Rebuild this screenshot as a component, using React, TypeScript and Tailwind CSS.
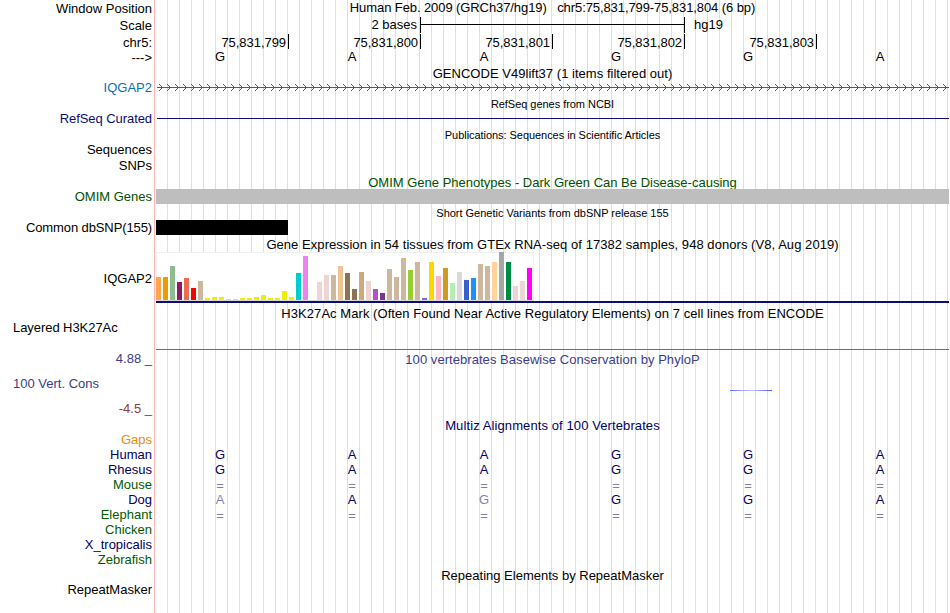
import type { ReactNode } from 'react';

type RowProps = {
  label?: string;
  labelClass?: string;
  height: string;
  children?: ReactNode;
};

const expression: [number, string][] = [
  [23, '#ffa54f'], [23, '#ee9a00'], [34, '#8fbc8f'], [18, '#8b1c62'], [22, '#ee6a50'], [12, '#ff0000'],
  [19, '#cdb79e'], [2, '#eeee00'], [3, '#eeee00'], [3, '#eeee00'], [1, '#eeee00'], [1, '#eeee00'],
  [2, '#eeee00'], [2, '#eeee00'], [3, '#eeee00'], [5, '#eeee00'], [2, '#eeee00'], [2, '#eeee00'],
  [9, '#eeee00'], [3, '#eeee00'], [27, '#00cdcd'], [44, '#ee82ee'], [0, '#9ac0cd'], [18, '#eed5d2'],
  [25, '#eed5d2'], [25, '#cdb79e'], [34, '#eec591'], [27, '#8b7355'], [11, '#8b7355'], [28, '#cdaa7d'],
  [19, '#eed5d2'], [11, '#b452cd'], [7, '#7a378b'], [31, '#cdb79e'], [23, '#cdb79e'], [42, '#cdb79e'],
  [30, '#9acd32'], [38, '#cdb79e'], [2, '#7a67ee'], [38, '#ffd700'], [24, '#ffb6c1'], [32, '#cd9b1d'],
  [17, '#b4eeb4'], [28, '#d9d9d9'], [20, '#3a5fcd'], [22, '#1e90ff'], [36, '#cdb79e'], [34, '#cdb79e'],
  [38, '#ffd39b'], [48, '#a6a6a6'], [38, '#008b45'], [14, '#eed5d2'], [19, '#eed5d2'], [32, '#ff00ff'],
];

const species = [
  { name: 'Gaps', color: 'text-[#e68c0a]', bases: '' },
  { name: 'Human', color: 'text-[#000064]', bases: 'GAAGGA' },
  { name: 'Rhesus', color: 'text-[#000064]', bases: 'GAAGGA' },
  { name: 'Mouse', color: 'text-[#005a00]', bases: '======' },
  { name: 'Dog', color: 'text-[#000064]', bases: 'AAGGGA', mismatch: [0, 2] },
  { name: 'Elephant', color: 'text-[#005a00]', bases: '======' },
  { name: 'Chicken', color: 'text-[#005a00]', bases: '' },
  { name: 'X_tropicalis', color: 'text-[#000064]', bases: '' },
  { name: 'Zebrafish', color: 'text-[#005a00]', bases: '' },
];

const positions = ['75,831,799', '75,831,800', '75,831,801', '75,831,802', '75,831,803'];

function Row({ label, labelClass = 'pt-px text-right', height, children }: RowProps) {
  return (
    <div className={`flex ${height}`}>
      <div className={`w-[155px] shrink-0 border-r border-[#ffb4b4] bg-white pr-[2px] ${labelClass}`}>{label}</div>
      <div className="w-[794px] shrink-0 border-l border-white">{children}</div>
    </div>
  );
}

function Title({ children, className = '' }: { children: ReactNode; className?: string }) {
  return <div className={`text-center ${className}`}>{children}</div>;
}

function Bases({ bases, mismatch = [] }: { bases: string; mismatch?: number[] }) {
  return (
    <div className="-ml-[2px] grid w-[792px] grid-cols-6 text-center">
      {bases.split('').map((base, i) => (
        <span key={i} className={base === '=' ? 'pt-px opacity-50' : mismatch.includes(i) ? 'opacity-50' : ''}>
          {base}
        </span>
      ))}
    </div>
  );
}

// intron line with strand arrows every 8px
function GeneLine() {
  return (
    <svg width="793" height="15" className="block" shapeRendering="crispEdges">
      <defs>
        <pattern id="strand" x="1" width="8" height="15" patternUnits="userSpaceOnUse">
          <path d="M2 4h1v1h-1zM3 5h1v1h-1zM4 6h1v1h-1zM4 8h1v1h-1zM3 9h1v1h-1zM2 10h1v1h-1z" fill="#0c70ac" />
        </pattern>
      </defs>
      <rect x="1" width="792" height="15" fill="url(#strand)" />
      <rect x="1" y="7" width="792" height="1" fill="#0c70ac" />
    </svg>
  );
}

function Expression() {
  return (
    <>
      <div className="flex h-[49px] w-[378px] items-end gap-[2px] border border-[#f0f0f0] border-b-[#d9d9d9] bg-white">
        {expression.map(([height, color], i) => (
          <div key={i} className="w-[5px] shrink-0 first:-ml-px" style={{ height, backgroundColor: color }} />
        ))}
      </div>
      <div className="h-[2px] bg-[#0c0c78]" />
    </>
  );
}

export default function App() {
  return (
    <div className="h-[613px] w-[949px] overflow-hidden bg-[linear-gradient(90deg,#dcdcf8_1px,transparent_1px)] bg-[length:12px_100%] bg-[position:11px_0] font-['Liberation_Sans',Arial,sans-serif] text-[13px] leading-[15px] whitespace-pre text-black">
      <Row label="Window Position" height="h-[17px]">
        <Title className="tracking-[-0.09px]">Human Feb. 2009 (GRCh37/hg19)   chr5:75,831,799-75,831,804 (6 bp)</Title>
      </Row>
      <Row label="Scale" height="h-[17px]">
        <div className="flex h-4">
          <span className="w-[264px] pr-[3px] text-right">2 bases</span>
          <div className="flex w-[265px] items-center border-x border-black">
            <div className="-mt-px h-px w-full bg-black" />
          </div>
          <span className="pl-[9px]">hg19</span>
        </div>
      </Row>
      <Row label="chr5:" height="h-[15px]">
        <div className="-ml-px flex">
          {positions.map((position) => (
            <div key={position} className="h-[15px] w-[132px] border-r border-black pt-px pr-[2px] text-right tracking-[-0.05px] first:w-[134px]">
              {position}
            </div>
          ))}
        </div>
      </Row>
      <Row label="--->" height="h-[17px]">
        <Bases bases="GAAGGA" />
      </Row>
      <Row height="h-[14px]">
        <Title className="tracking-[0.03px]">GENCODE V49lift37 (1 items filtered out)</Title>
      </Row>
      <Row label="IQGAP2" labelClass="text-right text-[#0c70ac]" height="h-[15px]">
        <GeneLine />
      </Row>
      <Row height="h-4">
        <Title className="pt-[2px] text-[11px] tracking-[-0.04px]">RefSeq genes from NCBI</Title>
      </Row>
      <Row label="RefSeq Curated" labelClass="text-right tracking-[-0.07px] text-[#0c0c78]" height="h-[15px]">
        <div className="mt-[7px] ml-px h-px bg-[#0c0c78]" />
      </Row>
      <Row height="h-4">
        <Title className="pt-[2px] text-[11px] tracking-[-0.05px]">Publications: Sequences in Scientific Articles</Title>
      </Row>
      <Row label="Sequences" labelClass="text-right" height="h-4" />
      <Row label="SNPs" labelClass="text-right" height="h-4" />
      <Row height="h-[15px]">
        <Title className="pt-px text-[#005000]">OMIM Gene Phenotypes - Dark Green Can Be Disease-causing</Title>
      </Row>
      <Row label="OMIM Genes" labelClass="text-right text-[#005000]" height="h-[15px]">
        <div className="h-full bg-[#bebebe]" />
      </Row>
      <Row height="h-4">
        <Title className="pt-[2px] text-[11px] tracking-[-0.02px]">Short Genetic Variants from dbSNP release 155</Title>
      </Row>
      <Row label="Common dbSNP(155)" labelClass="text-right tracking-[-0.11px]" height="h-[15px]">
        <div className="h-full w-[132px] bg-black" />
      </Row>
      <Row height="h-[17px]">
        <Title className="pt-[2px] tracking-[0.055px]">Gene Expression in 54 tissues from GTEx RNA-seq of 17382 samples, 948 donors (V8, Aug 2019)</Title>
      </Row>
      <Row label="IQGAP2" labelClass="pt-[19px] text-right" height="h-[51px]">
        <Expression />
      </Row>
      <Row height="h-[17px]">
        <Title className="pt-[3px] tracking-[0.055px]">H3K27Ac Mark (Often Found Near Active Regulatory Elements) on 7 cell lines from ENCODE</Title>
      </Row>
      <Row label="Layered H3K27Ac" labelClass="pl-[13px] tracking-[-0.06px]" height="h-[29px]" />
      <Row height="h-[2px]">
        <div className="h-px bg-[#786878]" />
      </Row>
      <Row label="4.88 _" labelClass="text-right text-[#3c3c8c]" height="h-[25px]">
        <Title className="pt-px tracking-[0.05px] text-[#3c3c8c]">100 vertebrates Basewise Conservation by PhyloP</Title>
      </Row>
      <Row label="100 Vert. Cons" labelClass="pl-[13px] text-[#3c3c8c]" height="h-[25px]">
        <div className="mt-[14px] ml-[574px] h-px w-[42px] bg-linear-to-r from-[#6464ff] via-[#c8c8ff] to-[#5050ff]" />
      </Row>
      <Row label="-4.5 _" labelClass="text-right text-[#8c3c3c]" height="h-[17px]" />
      <Row height="h-[14px]">
        <Title className="tracking-[0.1px] text-[#000064]">Multiz Alignments of 100 Vertebrates</Title>
      </Row>
      {species.map(({ name, color, bases, mismatch }) => (
        <Row key={name} label={name} labelClass={`text-right ${color}`} height="h-[15px]">
          <div className="text-[#000064]">
            <Bases bases={bases} mismatch={mismatch} />
          </div>
        </Row>
      ))}
      <Row height="h-[15px]">
        <Title className="pt-px">Repeating Elements by RepeatMasker</Title>
      </Row>
      <Row label="RepeatMasker" labelClass="text-right" height="h-[31px]" />
    </div>
  );
}
